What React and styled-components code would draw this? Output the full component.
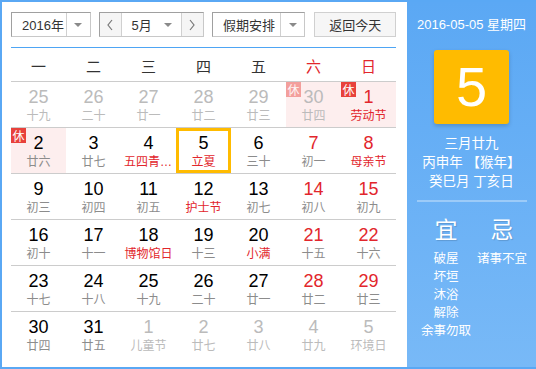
import React from 'react';
import styled, { createGlobalStyle, css } from 'styled-components';

const Global = createGlobalStyle`
  html, body { margin: 0; padding: 0; background: #fff; }
  * { box-sizing: border-box; }
  body { font-family: "Liberation Sans", "Noto Sans CJK SC", sans-serif; }
`;

const RED = '#e2262c';
const GRAY = '#bbbbbb';

const S = {
  Frame: styled.div`
    width: 536px;
    height: 369px;
    border: 2px solid #5aa8f4;
    border-right: none;
    display: flex;
    background: #fff;
  `,
  Main: styled.section`
    width: 405px;
    padding: 10px 11px 0 9px;
  `,
  Toolbar: styled.div`
    display: flex;
    height: 25px;
    gap: 8px;
    font-size: 13px;
    color: #333;
  `,
  Select: styled.div`
    display: flex;
    width: ${p => p.$w}px;
    height: 25px;
    border: 1px solid #c8c8c8;
    border-top-color: #a0a0a0;
    border-left-color: #a0a0a0;
    background: #fff;
  `,
  SelectText: styled.div`
    flex: 1;
    display: flex;
    align-items: center;
    padding-left: ${p => p.$pad}px;
    gap: ${p => p.$gap || 0}px;
  `,
  ArrowBox: styled.div`
    width: 24px;
    display: flex;
    align-items: center;
    justify-content: center;
    border-left: 1px solid #d0d0d0;
  `,
  Caret: styled.span`
    width: 0;
    height: 0;
    border-left: 4px solid transparent;
    border-right: 4px solid transparent;
    border-top: 4px solid #8a8a8a;
  `,
  Step: styled.div`
    width: 22px;
    display: flex;
    align-items: center;
    justify-content: center;
    background: #f5f5f5;
    ${p => p.$side === 'left'
      ? css`border-right: 1px solid #d0d0d0;`
      : css`border-left: 1px solid #d0d0d0;`}
  `,
  TodayBtn: styled.div`
    margin-left: 1px;
    width: 82px;
    height: 25px;
    display: flex;
    align-items: center;
    justify-content: center;
    border: 1px solid #d0d0d0;
    background: #f6f6f6;
  `,
  Head: styled.div`
    margin-top: 10px;
    border-top: 1px solid #4ea5f4;
    border-bottom: 1px solid #cccccc;
    display: grid;
    grid-template-columns: repeat(7, minmax(0, 1fr));
    height: 35px;
  `,
  WeekDay: styled.div`
    display: flex;
    align-items: center;
    justify-content: center;
    padding-top: 2px;
    font-size: 15px;
    color: ${p => (p.$weekend ? RED : '#333')};
  `,
  Row: styled.div`
    display: grid;
    grid-template-columns: repeat(7, minmax(0, 1fr));
    height: 46px;
    border-bottom: 1px solid ${p => (p.$last ? 'transparent' : '#cccccc')};
  `,
  Cell: styled.div`
    position: relative;
    min-width: 0;
    display: flex;
    flex-direction: column;
    align-items: center;
    padding-top: 5px;
    background: ${p => (p.$rest ? '#fdeeee' : 'transparent')};
    box-shadow: ${p => (p.$selected ? 'inset 0 0 0 3px #ffbb00' : 'none')};
  `,
  Num: styled.div`
    font-size: 18px;
    line-height: 20px;
    color: ${p => (p.$other ? GRAY : p.$red ? RED : '#000')};
  `,
  Lunar: styled.div`
    width: 100%;
    padding: 0 3px;
    text-align: center;
    font-size: 12px;
    line-height: 18px;
    white-space: nowrap;
    overflow: hidden;
    text-overflow: ellipsis;
    color: ${p => (p.$other ? GRAY : p.$red ? RED : '#8c8c8c')};
  `,
  Badge: styled.span`
    position: absolute;
    left: 0;
    top: 0;
    width: 15px;
    height: 15px;
    display: flex;
    align-items: center;
    justify-content: center;
    font-size: 12px;
    color: #fff;
    background: #e8413b;
    opacity: ${p => (p.$faded ? 0.45 : 1)};
  `,
  Side: styled.aside`
    width: 129px;
    display: flex;
    flex-direction: column;
    align-items: center;
    padding-top: 15px;
    color: #fff;
    background: linear-gradient(#5ba8f4, #78b9f7);
  `,
  DateLine: styled.div`
    font-size: 13px;
    line-height: 16px;
  `,
  DayBox: styled.div`
    margin-top: 17px;
    width: 75px;
    height: 74px;
    border-radius: 3px;
    background: #ffbb00;
    box-shadow: 0 2px 4px rgba(0, 0, 0, 0.18);
    display: flex;
    align-items: center;
    justify-content: center;
    font-size: 56px;
    line-height: 1;
  `,
  Info: styled.div`
    margin-top: 10px;
    font-size: 13.5px;
    line-height: 19px;
    text-align: center;
  `,
  Divider: styled.div`
    margin-top: 9px;
    width: 110px;
    height: 2px;
    background: #9ccbf8;
  `,
  Columns: styled.div`
    margin-top: 15px;
    display: grid;
    grid-template-columns: 56px 56px;
    width: 112px;
    margin-left: 5px;
  `,
  Col: styled.div`
    display: flex;
    flex-direction: column;
    align-items: center;
  `,
  ColHead: styled.div`
    font-size: 23px;
    line-height: 26px;
    margin-bottom: 7px;
    text-shadow: 1px 1px 1px rgba(0, 0, 0, 0.15);
  `,
  Item: styled.div`
    font-size: 12.5px;
    line-height: 18px;
    white-space: nowrap;
  `,
};

const Chevron = ({ dir }) => (
  <svg width="8" height="12" viewBox="0 0 8 12">
    <polyline
      points={dir === 'left' ? '6,1 2,6 6,11' : '2,1 6,6 2,11'}
      fill="none"
      stroke="#777"
      strokeWidth="1.2"
    />
  </svg>
);

// [day, lunar, flags]  o=other month, w=red number, f=festival, r=rest, s=selected
const weeks = [
  [[25, '十九', 'o'], [26, '二十', 'o'], [27, '廿一', 'o'], [28, '廿二', 'o'], [29, '廿三', 'o'], [30, '廿四', 'or'], [1, '劳动节', 'wfr']],
  [[2, '廿六', 'r'], [3, '廿七', ''], [4, '五四青年节', 'f'], [5, '立夏', 'fs'], [6, '三十', ''], [7, '初一', 'w'], [8, '母亲节', 'wf']],
  [[9, '初三', ''], [10, '初四', ''], [11, '初五', ''], [12, '护士节', 'f'], [13, '初七', ''], [14, '初八', 'w'], [15, '初九', 'w']],
  [[16, '初十', ''], [17, '十一', ''], [18, '博物馆日', 'f'], [19, '十三', ''], [20, '小满', 'f'], [21, '十五', 'w'], [22, '十六', 'w']],
  [[23, '十七', ''], [24, '十八', ''], [25, '十九', ''], [26, '二十', ''], [27, '廿一', ''], [28, '廿二', 'w'], [29, '廿三', 'w']],
  [[30, '廿四', ''], [31, '廿五', ''], [1, '儿童节', 'o'], [2, '廿七', 'o'], [3, '廿八', 'o'], [4, '廿九', 'o'], [5, '环境日', 'o']],
];

const weekDays = ['一', '二', '三', '四', '五', '六', '日'];

const App = () => (
  <>
    <Global />
    <S.Frame>
      <S.Main>
        <S.Toolbar>
          <S.Select $w={80}>
            <S.SelectText $pad={10}>2016年</S.SelectText>
            <S.ArrowBox><S.Caret /></S.ArrowBox>
          </S.Select>
          <S.Select $w={106}>
            <S.Step $side="left"><Chevron dir="left" /></S.Step>
            <S.SelectText $pad={10} $gap={12}>5月<S.Caret /></S.SelectText>
            <S.Step $side="right"><Chevron dir="right" /></S.Step>
          </S.Select>
          <S.Select $w={94}>
            <S.SelectText $pad={10}>假期安排</S.SelectText>
            <S.ArrowBox><S.Caret /></S.ArrowBox>
          </S.Select>
          <S.TodayBtn>返回今天</S.TodayBtn>
        </S.Toolbar>

        <S.Head>
          {weekDays.map((d, i) => (
            <S.WeekDay key={d} $weekend={i > 4}>{d}</S.WeekDay>
          ))}
        </S.Head>

        {weeks.map((week, wi) => (
          <S.Row key={wi} $last={wi === weeks.length - 1}>
            {week.map(([day, lunar, flags], di) => {
              const other = flags.includes('o');
              const rest = flags.includes('r');
              return (
                <S.Cell key={di} $rest={rest} $selected={flags.includes('s')}>
                  {rest && <S.Badge $faded={other}>休</S.Badge>}
                  <S.Num $other={other} $red={flags.includes('w')}>{day}</S.Num>
                  <S.Lunar $other={other} $red={flags.includes('f')}>{lunar}</S.Lunar>
                </S.Cell>
              );
            })}
          </S.Row>
        ))}
      </S.Main>

      <S.Side>
        <S.DateLine>2016-05-05 星期四</S.DateLine>
        <S.DayBox>5</S.DayBox>
        <S.Info>
          <div>三月廿九</div>
          <div>丙申年 【猴年】</div>
          <div>癸巳月 丁亥日</div>
        </S.Info>
        <S.Divider />
        <S.Columns>
          <S.Col>
            <S.ColHead>宜</S.ColHead>
            {['破屋', '坏垣', '沐浴', '解除', '余事勿取'].map(t => (
              <S.Item key={t}>{t}</S.Item>
            ))}
          </S.Col>
          <S.Col>
            <S.ColHead>忌</S.ColHead>
            <S.Item>诸事不宜</S.Item>
          </S.Col>
        </S.Columns>
      </S.Side>
    </S.Frame>
  </>
);

export default App;
